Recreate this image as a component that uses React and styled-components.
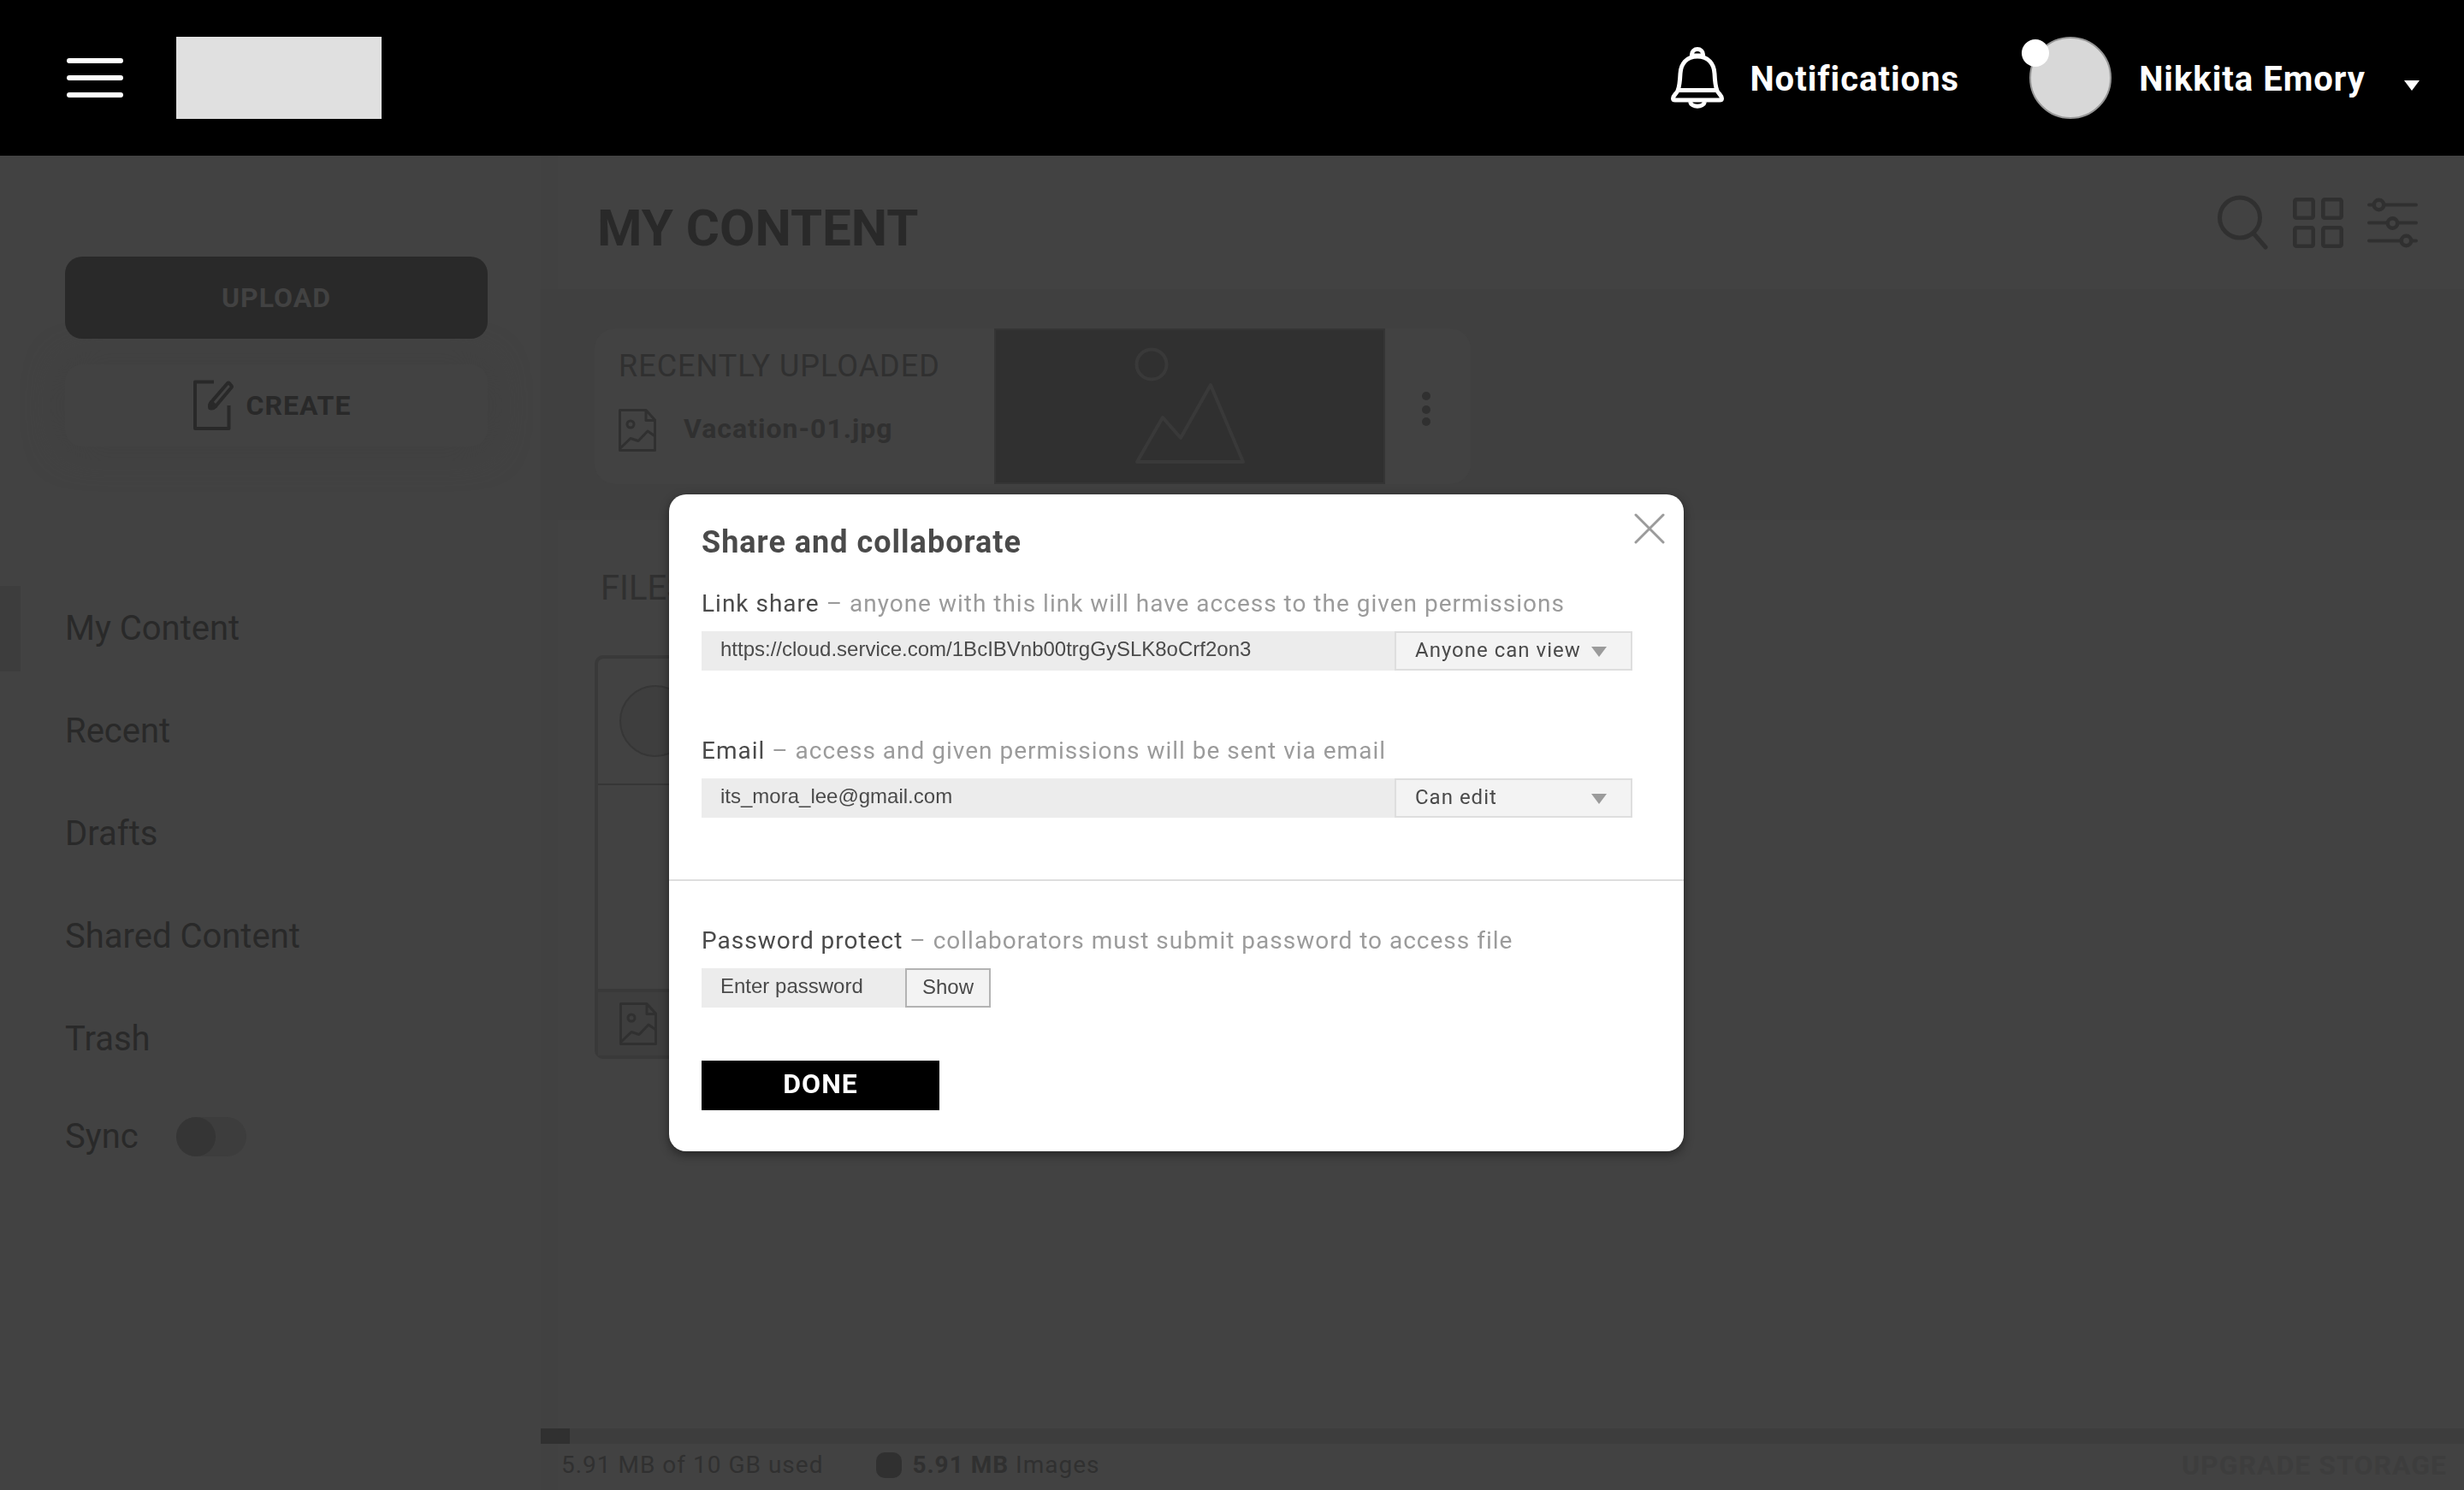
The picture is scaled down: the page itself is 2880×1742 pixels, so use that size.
import React from "react";
import styled, { createGlobalStyle, css } from "styled-components";

const c = {
  page: "#424242",
  band: "#404040",
  edge: "#414141",
  soft: "#3d3d3d",
  line: "#393939",
  ink: "#292929",
  icon: "#303030",
  text: "#4a4a4a",
  muted: "#9b9b9b",
};
const roboto = `Roboto, "Liberation Sans", sans-serif`;
const helvetica = `"Liberation Sans", Arial, sans-serif`;

const GlobalStyle = createGlobalStyle`
  *, *::before, *::after { box-sizing: border-box; }
  body { margin: 0; background: ${c.page}; font-family: ${roboto}; color: ${c.ink}; }
  h1, h2, h3, p, ul { margin: 0; padding: 0; font-weight: 400; }
  ul { list-style: none; }
  button, input, select { font: inherit; color: inherit; border: 0; margin: 0; padding: 0; background: none; border-radius: 0; }
  a { color: inherit; text-decoration: none; }
  svg { display: block; flex: none; }
`;

const Page = styled.div`
  min-height: 100vh;
  display: flex;
  flex-direction: column;
`;

const Header = styled.header`
  height: 182px;
  padding: 0 52px 0 78px;
  display: flex;
  align-items: center;
  background: #000;
  color: #fff;
`;
const MenuButton = styled.button`
  width: 66px;
  display: grid;
  gap: 14px;
`;
const MenuBar = styled.span`
  height: 6px;
  border-radius: 3px;
  background: #fff;
`;
const Logo = styled.div`
  width: 240px;
  height: 96px;
  margin: 0 auto 0 62px;
  background: #e0e0e0;
`;
const HeaderButton = styled.button`
  display: flex;
  align-items: center;
  gap: ${(p) => p.$gap}px;
  font-size: 40px;
  line-height: 48px;
  font-weight: 700;
  letter-spacing: 1px;
`;
const HeaderText = styled.span`
  display: flex;
  align-items: baseline;
  gap: 45px;
  padding-top: 3px;
`;
const Avatar = styled.span`
  position: relative;
  width: 96px;
  height: 96px;
  margin-left: 82px;
  border: 2px solid #979797;
  border-radius: 50%;
  background: #d8d8d8;
`;
const StatusDot = styled.span`
  position: absolute;
  top: 1px;
  left: -11px;
  width: 32px;
  height: 32px;
  border-radius: 50%;
  background: #fff;
`;

const Body = styled.div`
  flex: 1;
  display: grid;
  grid-template-columns: 632px 1fr;
`;

const Sidebar = styled.aside`
  padding-top: 118px;
`;
const Actions = styled.div`
  display: grid;
  gap: 30px;
  padding: 0 62px 0 76px;
`;
const ActionButton = styled.button`
  height: 96px;
  display: flex;
  align-items: center;
  justify-content: center;
  gap: 14px;
  border-radius: 20px;
  font-size: 32px;
  line-height: 40px;
  font-weight: 700;
  letter-spacing: 1px;
  ${(p) =>
    p.$primary
      ? css`
          position: relative;
          background: ${c.ink};
          color: ${c.page};
        `
      : css`
          padding-right: 10px;
          background: ${c.page};
          box-shadow: 0 0 40px 4px ${c.band};
        `}
`;
const Nav = styled.nav`
  margin-top: 163px;
  font-size: 40px;
  line-height: 48px;
`;
const NavList = styled.ul`
  display: grid;
  gap: 20px;
`;
const NavLink = styled.a`
  display: flex;
  align-items: center;
  height: 100px;
  padding-left: 52px;
  border-left: 24px solid ${(p) => (p.$active ? c.soft : "transparent")};
`;
const SyncRow = styled.label`
  display: flex;
  align-items: center;
  gap: 44px;
  height: 100px;
  margin-top: 14px;
  padding-left: 76px;
`;
const Toggle = styled.input`
  appearance: none;
  width: 82px;
  height: 46px;
  display: flex;
  border-radius: 23px;
  background: ${c.soft};
  &::before {
    content: "";
    width: 46px;
    border-radius: 50%;
    background: #353535;
  }
  &:checked {
    justify-content: flex-end;
  }
`;

const Main = styled.main`
  display: flex;
  flex-direction: column;
  box-shadow: inset 20px 0 ${c.edge};
`;
const Toolbar = styled.div`
  height: 158px;
  padding: 0 54px 0 66px;
  display: flex;
  align-items: center;
  justify-content: space-between;
  border-bottom: 2px solid ${c.band};
`;
const Title = styled.h1`
  padding-top: 14px;
  font-size: 60px;
  line-height: 72px;
  font-weight: 700;
  color: ${c.ink};
`;
const Tools = styled.div`
  display: flex;
  gap: 28px;
  color: ${c.icon};
`;
const IconButton = styled.button`
  display: grid;
  place-items: center;
`;

const RecentBand = styled.section`
  padding: 44px 63px 42px;
  background: ${c.band};
`;
const RecentCard = styled.article`
  width: 1024px;
  max-width: 100%;
  display: grid;
  grid-template-columns: 1fr 457px 96px;
  padding-right: 4px;
  border-radius: 24px;
  background: ${c.page};
  color: ${c.icon};
`;
const RecentInfo = styled.div`
  padding: 22px 28px;
`;
const RecentTitle = styled.h2`
  font-size: 36px;
  line-height: 44px;
  letter-spacing: 1px;
  white-space: nowrap;
`;
const FileLine = styled.div`
  display: flex;
  align-items: center;
  gap: 32px;
  margin-top: 28px;
`;
const FileName = styled.span`
  padding-bottom: 4px;
  font-size: 32px;
  line-height: 40px;
  font-weight: 700;
  letter-spacing: 1px;
`;
const Thumb = styled.div`
  height: 182px;
  display: grid;
  place-items: center;
  border: 2px solid #353535;
  background: ${c.icon};
  color: #393939;
`;

const Files = styled.section`
  flex: 1;
  padding: 56px 63px;
  color: ${c.icon};
`;
const FilesTitle = styled.h2`
  padding-left: 7px;
  font-size: 40px;
  line-height: 48px;
`;
const FileCard = styled.article`
  width: 464px;
  margin-top: 54px;
  border: 4px solid ${c.line};
  border-radius: 10px;
`;
const FileCardTop = styled.div`
  height: 148px;
  padding: 31px 25px;
  border-bottom: 2px solid #363636;
`;
const Owner = styled.div`
  width: 84px;
  height: 84px;
  border: 2px solid #363636;
  border-radius: 50%;
  background: #3e3e3e;
`;
const FileCardBody = styled.div`
  height: 238px;
`;
const FileCardFooter = styled.div`
  padding: 12px 25px;
  border-top: 4px solid ${c.line};
  background: #3e3e3e;
`;

const Meter = styled.progress`
  appearance: none;
  display: block;
  width: 100%;
  height: 18px;
  border: 0;
  background: ${c.soft};
  &::-webkit-progress-bar {
    background: ${c.soft};
  }
  &::-webkit-progress-value {
    background: ${c.icon};
  }
`;
const StorageRow = styled.div`
  height: 54px;
  padding: 0 20px 4px 24px;
  display: flex;
  align-items: center;
  font-size: 28px;
  line-height: 36px;
  letter-spacing: 1px;
  color: ${c.icon};
`;
const Swatch = styled.span`
  width: 30px;
  height: 30px;
  margin: 0 12px 0 62px;
  border-radius: 10px;
  background: ${c.icon};
`;
const Upgrade = styled.a`
  margin-left: auto;
  font-size: 32px;
  font-weight: 700;
  color: ${c.soft};
`;

const Overlay = styled.div`
  position: fixed;
  inset: 182px 0 0;
  padding-right: 130px;
  display: grid;
  place-items: center;
`;
const Dialog = styled.section`
  position: relative;
  width: 1186px;
  padding: 34px 0 48px;
  border-radius: 20px;
  background: #fff;
  color: ${c.text};
  box-shadow: 0 4px 12px rgba(0, 0, 0, 0.45);
`;
const CloseButton = styled.button`
  position: absolute;
  top: 22px;
  right: 22px;
  color: ${c.muted};
`;
const DialogTitle = styled.h2`
  padding: 0 38px;
  font-size: 36px;
  line-height: 44px;
  font-weight: 700;
  letter-spacing: 1px;
`;
const ShareFields = styled.div`
  display: grid;
  gap: 76px;
  padding: 32px 60px 72px 38px;
`;
const PasswordPart = styled.div`
  padding: 52px 60px 0 38px;
  border-top: 2px solid #dedede;
`;
const Label = styled.label`
  display: block;
  margin-bottom: 14px;
  font-size: 28px;
  line-height: 36px;
  letter-spacing: 1px;
`;
const Hint = styled.span`
  color: ${c.muted};
`;
const FieldRow = styled.div`
  display: flex;
  height: 46px;
`;
const TextInput = styled.input`
  flex: ${(p) => (p.$short ? "0 0 238px" : "1")};
  min-width: 0;
  padding: 0 22px 4px;
  background: #ececec;
  font-family: ${helvetica};
  font-size: 24px;
  line-height: 28px;
  &::placeholder {
    color: inherit;
    opacity: 1;
  }
`;
const SelectBox = styled.div`
  position: relative;
  width: 278px;
`;
const Select = styled.select`
  appearance: none;
  width: 100%;
  height: 100%;
  padding: 0 52px 2px 22px;
  border: 2px solid #dedede;
  background: #f3f3f3;
  font-size: 24px;
  line-height: 28px;
  letter-spacing: 1px;
`;
const SelectArrow = styled.svg`
  position: absolute;
  top: 18px;
  right: 30px;
  pointer-events: none;
  fill: ${c.muted};
`;
const ShowButton = styled.button`
  width: 100px;
  padding-bottom: 2px;
  border: 2px solid #b3b3b3;
  background: #f3f3f3;
  font-family: ${helvetica};
  font-size: 24px;
  line-height: 28px;
`;
const DoneButton = styled.button`
  display: block;
  width: 278px;
  height: 58px;
  margin-top: 62px;
  padding-bottom: 4px;
  background: #000;
  color: #fff;
  font-size: 32px;
  line-height: 40px;
  font-weight: 700;
  letter-spacing: 1px;
`;

const BellIcon = () => (
  <svg width="62" height="72" viewBox="0 0 62 72" fill="none" stroke="currentColor" strokeWidth="5" aria-hidden="true">
    <path d="M24.500 11V8.500a6.500 6 0 0 1 13 0V11M25 10h12" />
    <path d="M31 11C18 11 11.500 20 11 31C10.500 42 10 46 8 51C6 55 2.500 57 2.500 60Q2.500 62 5 62H57Q59.500 62 59.500 60C59.500 57 56 55 54 51C52 46 51.500 42 51 31C50.500 20 44 11 31 11ZM8 50.500H54" />
    <path d="M22.500 64C24 71 38 71 39.500 64" />
  </svg>
);
const Caret = () => (
  <svg width="18" height="12" viewBox="0 0 18 12" fill="currentColor" aria-hidden="true">
    <path d="M0 0H18L9 12Z" />
  </svg>
);
const CreateIcon = () => (
  <svg width="48" height="60" viewBox="0 0 48 60" fill="none" stroke="currentColor" strokeWidth="4" strokeLinejoin="round" aria-hidden="true">
    <path d="M24 2.500H2V57H41.500V30" />
    <path d="M40 4Q41 3 42 4L44.500 7Q45.500 8 44.500 9L26 31Q23 34 19.500 33Q18.500 29 21 26Z" />
    <path d="M21 26L26 31Q23 34 19.500 33Q18.500 29 21 26Z" fill="currentColor" />
  </svg>
);
const SearchIcon = () => (
  <svg width="60" height="64" viewBox="0 0 60 64" fill="none" stroke="currentColor" strokeWidth="5" strokeLinecap="round" aria-hidden="true">
    <circle cx="26" cy="26.500" r="23.500" />
    <path d="M43 46L56 61" />
  </svg>
);
const GridIcon = () => (
  <svg width="59" height="59" viewBox="0 0 59 59" fill="none" stroke="currentColor" strokeWidth="4.600" aria-hidden="true">
    {[2.3, 35.3].map((y) =>
      [2.3, 35.3].map((x) => <rect key={`${x}-${y}`} x={x} y={y} width="21.400" height="21.400" rx="2" />)
    )}
  </svg>
);
const FilterIcon = () => (
  <svg width="59" height="59" viewBox="0 0 59 59" fill="none" stroke="currentColor" strokeWidth="4" strokeLinecap="round" aria-hidden="true">
    <path d="M2 8.500H7M20 8.500H57M2 29.500H23M36 29.500H57M2 50.500H39M52 50.500H57" />
    <g strokeWidth="4.500">
      <circle cx="13.500" cy="8.500" r="5.700" />
      <circle cx="29.500" cy="30" r="5.700" />
      <circle cx="45.500" cy="50.500" r="5.700" />
    </g>
  </svg>
);
const ImageFileIcon = () => (
  <svg width="44" height="50" viewBox="0 0 44 50" fill="none" stroke="currentColor" strokeWidth="3" strokeLinejoin="round" aria-hidden="true">
    <path d="M1.500 1.500H32L42.500 13V48.500H1.500ZM32 1.500V13.500H42.500" />
    <circle cx="14" cy="18" r="4" />
    <path d="M2 46L14 34.500L23 37.500L34 26L42 31.500" />
  </svg>
);
const Mountains = () => (
  <svg width="130" height="138" viewBox="0 0 130 138" fill="none" stroke="currentColor" strokeWidth="4" strokeLinejoin="round" aria-hidden="true">
    <circle cx="20" cy="20" r="17.500" />
    <path d="M3 134L33 82L54 106L89 44L127 134Z" />
  </svg>
);
const MoreIcon = () => (
  <svg width="10" height="46" viewBox="0 0 10 46" fill="currentColor" aria-hidden="true">
    <circle cx="5" cy="11" r="5" />
    <circle cx="5" cy="27" r="5" />
    <circle cx="5" cy="41" r="5" />
  </svg>
);
const CloseIcon = () => (
  <svg width="36" height="36" viewBox="0 0 36 36" fill="none" stroke="currentColor" strokeWidth="3" strokeLinecap="round" aria-hidden="true">
    <path d="M2 2L34 34M34 2L2 34" />
  </svg>
);

const navItems = ["My Content", "Recent", "Drafts", "Shared Content", "Trash"];

function Field({ id, label, hint, children }) {
  return (
    <div>
      <Label htmlFor={id}>
        {label} <Hint>– {hint}</Hint>
      </Label>
      <FieldRow>{children}</FieldRow>
    </div>
  );
}

function Permission({ label, value }) {
  return (
    <SelectBox>
      <Select aria-label={label} defaultValue={value}>
        <option>{value}</option>
      </Select>
      <SelectArrow width="18" height="12" viewBox="0 0 18 12" aria-hidden="true">
        <path d="M0 0H18L9 12Z" />
      </SelectArrow>
    </SelectBox>
  );
}

export default function App() {
  return (
    <Page>
      <GlobalStyle />
      <Header>
        <MenuButton aria-label="Menu">
          <MenuBar />
          <MenuBar />
          <MenuBar />
        </MenuButton>
        <Logo />
        <HeaderButton $gap={30}>
          <BellIcon />
          <HeaderText>Notifications</HeaderText>
        </HeaderButton>
        <HeaderButton $gap={32}>
          <Avatar>
            <StatusDot />
          </Avatar>
          <HeaderText>
            Nikkita Emory
            <Caret />
          </HeaderText>
        </HeaderButton>
      </Header>

      <Body>
        <Sidebar>
          <Actions>
            <ActionButton $primary>UPLOAD</ActionButton>
            <ActionButton>
              <CreateIcon />
              CREATE
            </ActionButton>
          </Actions>
          <Nav>
            <NavList>
              {navItems.map((item, i) => (
                <li key={item}>
                  <NavLink href="#" $active={i === 0}>
                    {item}
                  </NavLink>
                </li>
              ))}
            </NavList>
            <SyncRow>
              Sync
              <Toggle type="checkbox" />
            </SyncRow>
          </Nav>
        </Sidebar>

        <Main>
          <Toolbar>
            <Title>MY CONTENT</Title>
            <Tools>
              <IconButton aria-label="Search"><SearchIcon /></IconButton>
              <IconButton aria-label="Grid view"><GridIcon /></IconButton>
              <IconButton aria-label="Filters"><FilterIcon /></IconButton>
            </Tools>
          </Toolbar>
          <RecentBand>
            <RecentCard>
              <RecentInfo>
                <RecentTitle>RECENTLY UPLOADED</RecentTitle>
                <FileLine>
                  <ImageFileIcon />
                  <FileName>Vacation-01.jpg</FileName>
                </FileLine>
              </RecentInfo>
              <Thumb>
                <Mountains />
              </Thumb>
              <IconButton aria-label="More"><MoreIcon /></IconButton>
            </RecentCard>
          </RecentBand>
          <Files>
            <FilesTitle>FILES</FilesTitle>
            <FileCard>
              <FileCardTop>
                <Owner />
              </FileCardTop>
              <FileCardBody />
              <FileCardFooter>
                <ImageFileIcon />
              </FileCardFooter>
            </FileCard>
          </Files>
          <footer>
            <Meter aria-label="Storage used" value={15} max={1000} />
            <StorageRow>
              <span>5.91 MB of 10 GB used</span>
              <Swatch />
              <span>
                <b>5.91 MB</b> Images
              </span>
              <Upgrade href="#">UPGRADE STORAGE</Upgrade>
            </StorageRow>
          </footer>
        </Main>
      </Body>

      <Overlay>
        <Dialog role="dialog" aria-labelledby="share-title">
          <CloseButton aria-label="Close">
            <CloseIcon />
          </CloseButton>
          <DialogTitle id="share-title">Share and collaborate</DialogTitle>
          <ShareFields>
            <Field id="link" label="Link share" hint="anyone with this link will have access to the given permissions">
              <TextInput id="link" type="text" defaultValue="https://cloud.service.com/1BcIBVnb00trgGySLK8oCrf2on3" />
              <Permission label="Link permission" value="Anyone can view" />
            </Field>
            <Field id="email" label="Email" hint="access and given permissions will be sent via email">
              <TextInput id="email" type="email" defaultValue="its_mora_lee@gmail.com" />
              <Permission label="Email permission" value="Can edit" />
            </Field>
          </ShareFields>
          <PasswordPart>
            <Field id="password" label="Password protect" hint="collaborators must submit password to access file">
              <TextInput id="password" type="password" placeholder="Enter password" $short />
              <ShowButton>Show</ShowButton>
            </Field>
            <DoneButton>DONE</DoneButton>
          </PasswordPart>
        </Dialog>
      </Overlay>
    </Page>
  );
}
